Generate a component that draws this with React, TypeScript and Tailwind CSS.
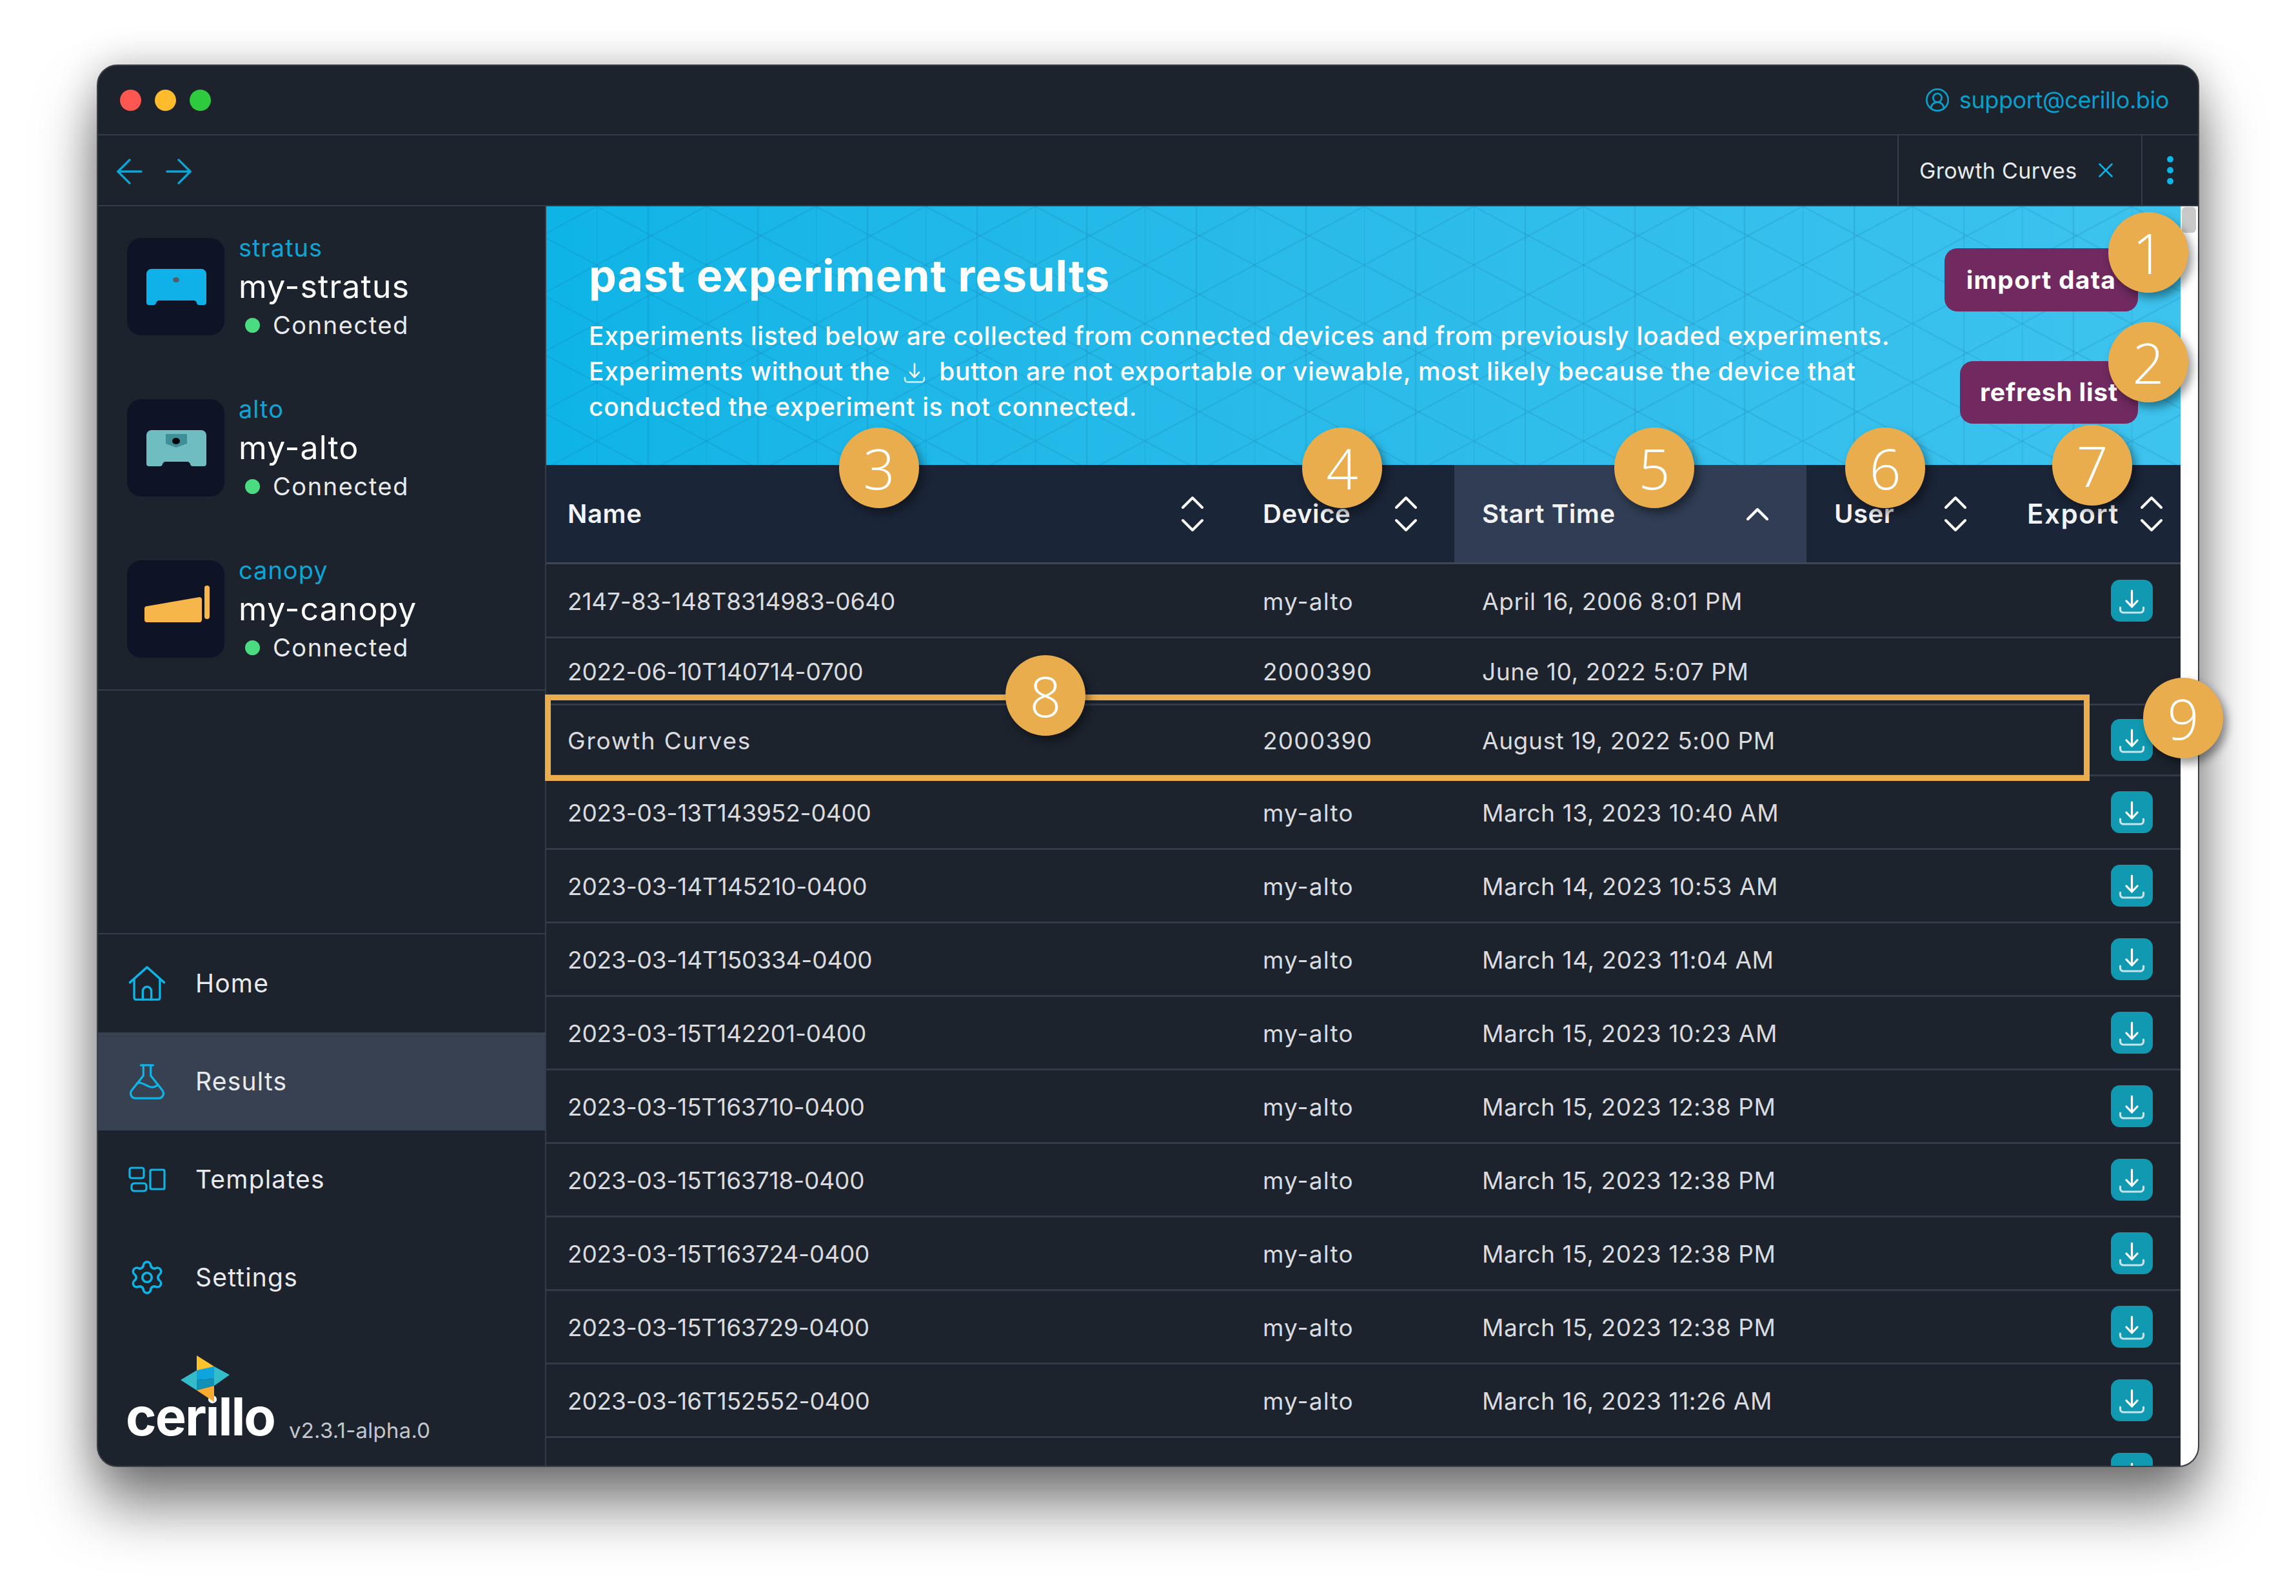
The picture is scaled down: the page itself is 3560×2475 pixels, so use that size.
import { ArrowLeft, ArrowRight, CircleUserRound, Settings, X } from "lucide-react";

const rows = [
  { name: "2147-83-148T8314983-0640", device: "my-alto", start: "April 16, 2006 8:01 PM", h: "h-[115px]", dl: true },
  { name: "2022-06-10T140714-0700", device: "2000390", start: "June 10, 2022 5:07 PM", h: "h-[104px]", dl: false },
  { name: "Growth Curves", device: "2000390", start: "August 19, 2022 5:00 PM", h: "h-[110px]", dl: true },
  { name: "2023-03-13T143952-0400", device: "my-alto", start: "March 13, 2023 10:40 AM", h: "h-[114px]", dl: true },
  { name: "2023-03-14T145210-0400", device: "my-alto", start: "March 14, 2023 10:53 AM", h: "h-[114px]", dl: true },
  { name: "2023-03-14T150334-0400", device: "my-alto", start: "March 14, 2023 11:04 AM", h: "h-[114px]", dl: true },
  { name: "2023-03-15T142201-0400", device: "my-alto", start: "March 15, 2023 10:23 AM", h: "h-[114px]", dl: true },
  { name: "2023-03-15T163710-0400", device: "my-alto", start: "March 15, 2023 12:38 PM", h: "h-[114px]", dl: true },
  { name: "2023-03-15T163718-0400", device: "my-alto", start: "March 15, 2023 12:38 PM", h: "h-[114px]", dl: true },
  { name: "2023-03-15T163724-0400", device: "my-alto", start: "March 15, 2023 12:38 PM", h: "h-[114px]", dl: true },
  { name: "2023-03-15T163729-0400", device: "my-alto", start: "March 15, 2023 12:38 PM", h: "h-[114px]", dl: true },
  { name: "2023-03-16T152552-0400", device: "my-alto", start: "March 16, 2023 11:26 AM", h: "h-[114px]", dl: true },
  { name: "2023-03-16T152601-0400", device: "my-alto", start: "March 16, 2023 11:27 AM", h: "h-[114px]", dl: true },
];

const badges = [
  { n: "1", pos: "left-[3269px] top-[329px]" },
  { n: "2", pos: "left-[3269px] top-[499px]" },
  { n: "3", pos: "left-[1301px] top-[663px]" },
  { n: "4", pos: "left-[2019px] top-[663px]" },
  { n: "5", pos: "left-[2503px] top-[663px]" },
  { n: "6", pos: "left-[2861px] top-[663px]" },
  { n: "7", pos: "left-[3182px] top-[659px]" },
  { n: "8", pos: "left-[1559px] top-[1016px]" },
  { n: "9", pos: "left-[3323px] top-[1051px]" },
];

function StratusIcon() {
  return (
    <svg viewBox="0 0 151 151" className="h-full w-full">
      <path d="M38 48H115a8 8 0 0 1 8 8V100a4 4 0 0 1-4 4H112a4 4 0 0 1-4-4l-3-3H48l-3 3a4 4 0 0 1-4 4H34a4 4 0 0 1-4-4V56a8 8 0 0 1 8-8Z" fill="#0fb2e8" />
      <ellipse cx="76" cy="65" rx="5" ry="4" fill="#555c66" />
    </svg>
  );
}

function AltoIcon() {
  return (
    <svg viewBox="0 0 151 151" className="h-full w-full">
      <path d="M38 48H115a8 8 0 0 1 8 8V100a4 4 0 0 1-4 4H102a4 4 0 0 1-4-4l-3-3H58l-3 3a4 4 0 0 1-4 4H34a4 4 0 0 1-4-4V56a8 8 0 0 1 8-8Z" fill="#6fbcc1" />
      <path d="M60 54H93V69L76 75 60 69Z" fill="#3e8f97" />
      <ellipse cx="76" cy="65" rx="6" ry="5" fill="#05060a" />
    </svg>
  );
}

function CanopyIcon() {
  return (
    <svg viewBox="0 0 151 151" className="h-full w-full">
      <path d="M31 71 112 57a4 4 0 0 1 4 4V92a4 4 0 0 1-4 4H31a4 4 0 0 1-4-4V75a4 4 0 0 1 4-4Z" fill="#f7b64a" />
      <rect x="120" y="39" width="8" height="52" rx="4" fill="#f7b64a" />
    </svg>
  );
}

function HomeIcon() {
  return (
    <svg viewBox="0 0 60 58" className="h-[55px] w-[58px]" fill="none" stroke="#0eb4e6" strokeWidth="3.6" strokeLinecap="round" strokeLinejoin="round">
      <path d="M2 27 30 2 58 27" />
      <path d="M9 21V52a3 3 0 0 0 3 3H48a3 3 0 0 0 3-3V21" />
      <path d="M23 55V41a7 7 0 0 1 14 0V55" />
    </svg>
  );
}

function FlaskIcon() {
  return (
    <svg viewBox="0 0 60 58" className="h-[55px] w-[58px]" fill="none" stroke="#0eb4e6" strokeWidth="3.4" strokeLinecap="round" strokeLinejoin="round">
      <path d="M20 2H40" />
      <path d="M24 2V19L5 43a8 8 0 0 0 6 13H49a8 8 0 0 0 6-13L36 19V2" />
      <path d="M14 31C22 28 30 38 38 38 43 38 45 36 48 34" />
    </svg>
  );
}

function TemplatesIcon() {
  return (
    <svg viewBox="0 0 58 40" className="h-[40px] w-[58px]" fill="none" stroke="#0eb4e6" strokeWidth="3.2">
      <rect x="2" y="2" width="22" height="16" rx="3" />
      <rect x="5" y="26" width="23" height="12" rx="4" />
      <rect x="34" y="5" width="22" height="30" rx="2" />
    </svg>
  );
}

function LogoMark() {
  return (
    <svg viewBox="0 0 85 75" className="absolute left-[123px] top-[44px] h-[75px] w-[85px]">
      <path d="M30 1 57 18 30 28Z" fill="#fcc32c" />
      <path d="M5 39 30 24V55Z" fill="#35bccb" />
      <path d="M57 18 81 31 57 48Z" fill="#35bccb" />
      <path d="M30 24 57 18V37L30 39Z" fill="#0ea5df" />
      <path d="M30 39 57 37V48L30 55Z" fill="#1290b5" />
      <path d="M30 55 57 48V73Z" fill="#fbab2f" />
    </svg>
  );
}

function SortIcon() {
  return (
    <svg viewBox="0 0 34 54" className="h-[54px] w-[34px] shrink-0" fill="none" stroke="#ffffff" strokeWidth="4" strokeLinecap="round" strokeLinejoin="round">
      <path d="M2 17 17 2 32 17" />
      <path d="M2 37 17 52 32 37" />
    </svg>
  );
}

function DownloadGlyph({ className }: { className: string }) {
  return (
    <svg viewBox="0 0 65 65" className={className} fill="none" stroke="#ffffff" strokeWidth="3.2" strokeLinecap="round" strokeLinejoin="round">
      <path d="M32.5 17V41" />
      <path d="M24 33 32.5 42 41 33" />
      <path d="M14.5 43V46a5 5 0 0 0 5 5H45.5a5 5 0 0 0 5-5V43" strokeOpacity="0.75" />
    </svg>
  );
}

function Device({ kind, name, children }: { kind: string; name: string; children: React.ReactNode }) {
  return (
    <div className="flex h-[151px] items-center pl-[45px]">
      <div className="h-[151px] w-[151px] shrink-0 rounded-[22px] bg-[#0e1325]">{children}</div>
      <div className="ml-[22px] flex flex-col">
        <div className="h-[59px] text-[38px] leading-[59px] tracking-[1px] text-[#0da5d6]">{kind}</div>
        <div className="h-[60px] text-[50px] leading-[60px] tracking-[1.1px] text-white">{name}</div>
        <div className="flex h-[60px] items-center pl-[10px] text-[38px] tracking-[1.6px] text-[#e8eaed]">
          <span className="mr-[20px] h-[23px] w-[23px] rounded-full bg-[#4bdc82]" />
          Connected
        </div>
      </div>
    </div>
  );
}

function NavRow({ icon, label, active }: { icon: React.ReactNode; label: string; active?: boolean }) {
  return (
    <div className={active ? "flex h-[152px] items-center bg-[#384152] pl-[47px]" : "flex h-[152px] items-center pl-[47px]"}>
      <div className="flex w-[58px] justify-center">{icon}</div>
      <span className="ml-[46px] text-[39px] tracking-[1.2px] text-[#e8eaed]">{label}</span>
    </div>
  );
}

function Banner() {
  return (
    <div className="relative flex h-[401px] shrink-0 justify-between bg-gradient-to-r from-[#0eb4e6] to-[#3dc3ee]">
      <svg className="absolute inset-0 h-full w-full">
        <defs>
          <pattern id="lattice" width="170" height="182" patternUnits="userSpaceOnUse" patternTransform="translate(78 0)">
            <g stroke="#0b5f8c" strokeOpacity="0.14" strokeWidth="2.4" fill="none">
              <path d="M0 0V182M80 0V182" />
              <path d="M0 0 170 91M0 91 170 182" />
              <path d="M170 0 0 91M170 91 0 182" />
            </g>
          </pattern>
        </defs>
        <rect width="100%" height="100%" fill="url(#lattice)" />
      </svg>
      <div className="relative min-w-0 flex-1 pl-[66px] text-white">
        <h1 className="mt-[66px] text-[68px] font-bold leading-[82px] tracking-[1px]">past experiment results</h1>
        <p className="mt-[26px] whitespace-nowrap text-[39px] font-medium leading-[54.5px] tracking-[0.65px]">
          Experiments listed below are collected from connected devices and from previously loaded experiments.
          <br />
          Experiments without the <DownloadGlyph className="inline-block h-[54px] w-[54px] align-[-14px]" /> button are not exportable or viewable, most likely because the device that
          <br />
          conducted the experiment is not connected.
        </p>
      </div>
      <div className="relative flex shrink-0 flex-col items-end gap-[77px] pr-[66px] pt-[65px]">
        <button className="flex h-[98px] w-[300px] items-center justify-center rounded-[20px] bg-[#702a60] text-[39px] font-bold tracking-[1.2px] text-white">import data</button>
        <button className="flex h-[97px] w-[276px] items-center justify-center rounded-[20px] bg-[#702a60] text-[39px] font-bold tracking-[0.8px] text-white">refresh list</button>
      </div>
    </div>
  );
}

function TableHead() {
  return (
    <div className="grid h-[154px] shrink-0 grid-cols-[1077px_331px_546px_300px_281px] border-b-[3px] border-[#3d4655] bg-[#1b2538] text-[40px] font-semibold tracking-[0.6px] text-[#f2f3f5]">
      <div className="flex items-center justify-between pl-[33px] pr-[58px]">Name<SortIcon /></div>
      <div className="flex items-center justify-between pl-[34px] pr-[58px]">Device<SortIcon /></div>
      <div className="flex items-center justify-between bg-[#303d54] pl-[43px] pr-[59px]">
        Start Time
        <svg viewBox="0 0 34 20" className="h-[20px] w-[34px]" fill="none" stroke="#ffffff" strokeWidth="4.4" strokeLinecap="round" strokeLinejoin="round">
          <path d="M2 18 17 3 32 18" />
        </svg>
      </div>
      <div className="flex items-center justify-between pl-[43px] pr-[52px]">User<SortIcon /></div>
      <div className="flex items-center justify-between pl-[42px] pr-[29px] text-[42px] tracking-[1.6px]">Export<SortIcon /></div>
    </div>
  );
}

export default function App() {
  return (
    <div className="relative h-[2475px] w-[3560px] overflow-hidden bg-white pl-[150px] pt-[100px] font-['Inter',sans-serif]">
      <div className="flex h-[2175px] w-[3260px] flex-col overflow-hidden rounded-[32px] border-2 border-[#3b3f45] bg-[#1c232d] shadow-[0_60px_90px_rgba(0,0,0,0.5),0_0_60px_rgba(0,0,0,0.22)]">
        {/* title bar */}
        <div className="flex h-[108px] shrink-0 items-center justify-between border-b-2 border-[#343c49] pl-[34px] pr-[45px]">
          <div className="flex gap-[21px]">
            <span className="h-[33px] w-[33px] rounded-full bg-[#fe5650]" />
            <span className="h-[33px] w-[33px] rounded-full bg-[#febb2c]" />
            <span className="h-[33px] w-[33px] rounded-full bg-[#2ecb3f]" />
          </div>
          <div className="flex items-center text-[36px] tracking-[-0.4px] text-[#0a9fc9]">
            <CircleUserRound className="mr-[14px] h-[40px] w-[40px]" strokeWidth={1.6} />
            support@cerillo.bio
          </div>
        </div>
        {/* tabs */}
        <div className="flex h-[110px] shrink-0 items-center border-b-2 border-[#343c49]">
          <div className="flex flex-1 items-center pl-[18px] pt-[3px]">
            <ArrowLeft className="h-[62px] w-[62px] text-[#0da5d6]" strokeWidth={1.3} />
            <ArrowRight className="ml-[14px] h-[62px] w-[62px] text-[#0da5d6]" strokeWidth={1.3} />
          </div>
          <div className="flex h-full w-[378px] items-center border-l-2 border-[#343c49] pl-[32px] text-[34px] tracking-[0.3px] text-[#e8eaed]">
            Growth Curves
            <X className="ml-[26px] h-[38px] w-[38px] text-[#0eb4e6]" strokeWidth={1.6} />
          </div>
          <div className="flex h-full w-[88px] flex-col items-center justify-center gap-[7px] border-l-2 border-[#343c49]">
            <span className="h-[10px] w-[10px] rounded-full bg-[#0eb4e6]" />
            <span className="h-[10px] w-[10px] rounded-full bg-[#0eb4e6]" />
            <span className="h-[10px] w-[10px] rounded-full bg-[#0eb4e6]" />
          </div>
        </div>
        <div className="flex min-h-0 flex-1">
          {/* sidebar */}
          <aside className="flex w-[695px] shrink-0 flex-col border-r-2 border-[#343c49]">
            <div className="flex h-[751px] shrink-0 flex-col gap-[99px] border-b-2 border-[#343c49] pt-[49px]">
              <Device kind="stratus" name="my-stratus"><StratusIcon /></Device>
              <Device kind="alto" name="my-alto"><AltoIcon /></Device>
              <Device kind="canopy" name="my-canopy"><CanopyIcon /></Device>
            </div>
            <div className="flex-1 border-b-2 border-[#343c49]" />
            <NavRow icon={<HomeIcon />} label="Home" />
            <NavRow icon={<FlaskIcon />} label="Results" active />
            <NavRow icon={<TemplatesIcon />} label="Templates" />
            <NavRow icon={<Settings className="h-[58px] w-[58px] text-[#0eb4e6]" strokeWidth={1.5} />} label="Settings" />
            <div className="relative flex h-[216px] shrink-0 items-baseline pl-[43px] pt-[90px]">
              <span className="text-[81px] font-bold leading-[100px] tracking-[-2px] text-white">cerillo</span>
              <span className="ml-[22px] translate-y-[4px] text-[33px] tracking-[0.2px] text-[#c3c7cd]">v2.3.1-alpha.0</span>
              <LogoMark />
            </div>
          </aside>
          {/* results */}
          <main className="flex min-w-0 flex-1 flex-col overflow-hidden">
            <Banner />
            <TableHead />
            {rows.map((r) => (
              <div key={r.name} className={`grid ${r.h} shrink-0 grid-cols-[1077px_331px_546px_581px] items-center border-b-[3px] border-[#323b49] text-[37px] text-[#d9dbdf]`}>
                <div className={r.name === "Growth Curves" ? "pl-[33px] pt-[3px] tracking-[1.8px]" : "pl-[33px] pt-[3px] tracking-[-0.15px]"}>{r.name}</div>
                <div className="pl-[34px] pt-[3px] tracking-[1.2px]">{r.device}</div>
                <div className="pl-[43px] pt-[3px] tracking-[0.6px]">{r.start}</div>
                <div className="flex justify-end pr-[44px]">
                  {r.dl && (
                    <div className="h-[65px] w-[65px] rounded-[14px] bg-[#1199b1]">
                      <DownloadGlyph className="h-full w-full" />
                    </div>
                  )}
                </div>
              </div>
            ))}
          </main>
          {/* scrollbar */}
          <div className="w-[27px] shrink-0 bg-white pl-[2px] pr-[3px] pt-[1px]">
            <div className="h-[40px] rounded-[6px] bg-[#c9c9c9]" />
          </div>
        </div>
      </div>

      {/* annotations */}
      <div className="absolute left-[845px] top-[1077px] h-[134px] w-[2395px] border-[9px] border-[#eaad4d]" />
      {badges.map((b) => (
        <div key={b.n} className={`absolute ${b.pos} flex h-[125px] w-[124px] items-center justify-center rounded-full bg-[#eaad4d] font-['Open_Sans',sans-serif] text-[86px] font-light text-white shadow-[6px_8px_14px_rgba(0,0,0,0.4)]`}>
          {b.n}
        </div>
      ))}
    </div>
  );
}
